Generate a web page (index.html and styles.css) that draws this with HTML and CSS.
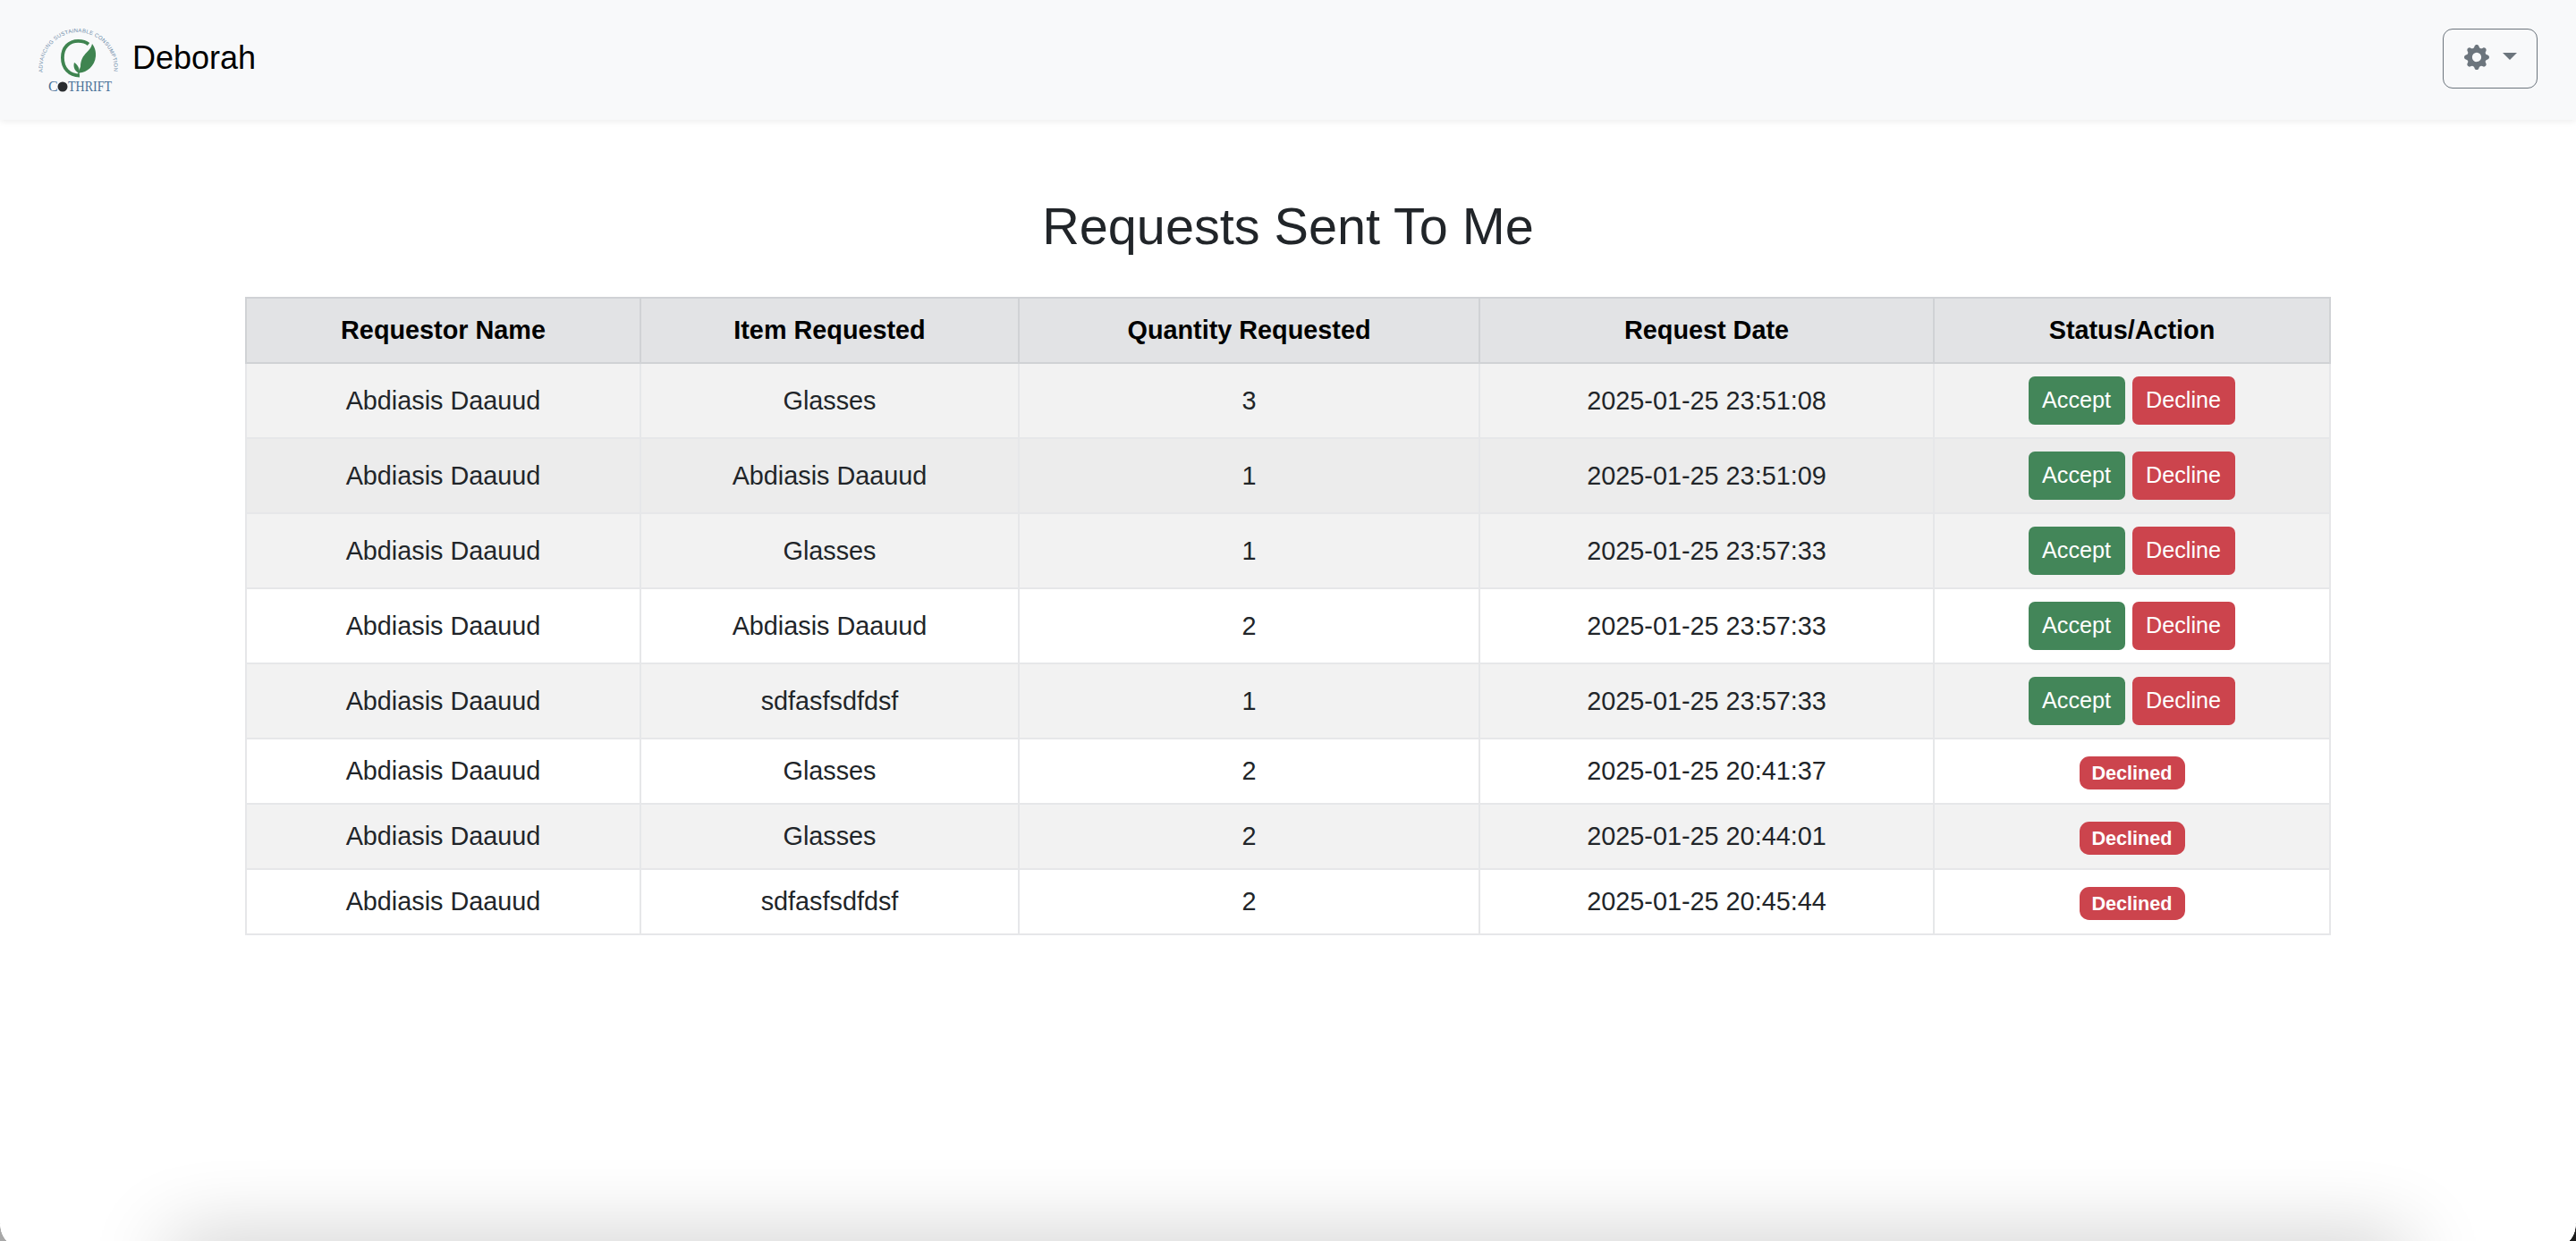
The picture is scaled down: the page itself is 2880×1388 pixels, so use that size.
FILE: index.html
```html
<!DOCTYPE html>
<html lang="en">
<head>
<meta charset="utf-8">
<title>Requests Sent To Me</title>
<link rel="stylesheet" href="styles.css">
</head>
<body>
<nav class="navbar">
  <a class="brand">
    <svg class="logo" viewBox="0 0 88 74" width="88" height="74">
      <defs><path id="logo-arc" d="M3.800 50 A40 40 0 1 1 83.200 50"/></defs>
      <text class="logo-arc-text"><textPath href="#logo-arc" textLength="134" lengthAdjust="spacing">ADVANCING SUSTAINABLE CONSUMPTION</textPath></text>
      <path class="logo-ring-line" d="M45 53.500C33 53.500 25.900 45 25.900 33.500C25.900 22 33 14.900 43.500 14.900C48 14.900 52 16 55 18.500"/>
      <path class="logo-leaf" d="M42 54.500C43.500 50 45 46.500 46 43.500C46 36 49 31.500 53 27.500C56 24.500 58.500 21.500 59 18C62 21.500 63.500 27 63 32C62 43 53 50 45 50.500C44 52 43 53.500 42 54.500Z"/>
      <path class="logo-leaf" d="M44.500 51C39.500 48.500 37.500 44 39 39C42.500 41 45.500 45.500 44.500 51Z"/>
      <text class="logo-name" x="10" y="71">C</text>
      <circle class="logo-dot" cx="26" cy="66" r="5.500"/>
      <text class="logo-name" x="32" y="71" textLength="49" lengthAdjust="spacingAndGlyphs">THRIFT</text>
    </svg>
    <span class="brand-name">Deborah</span>
  </a>
  <button class="settings" type="button" aria-label="Settings">
    <svg class="gear" viewBox="0 0 16 16" width="28" height="28"><path fill-rule="evenodd" d="M9.405 1.050c-.413-1.400-2.397-1.400-2.810 0l-.100.340a1.464 1.464 0 0 1-2.105.872l-.310-.170c-1.283-.698-2.686.705-1.987 1.987l.169.311c.446.820.023 1.841-.872 2.105l-.340.100c-1.400.413-1.400 2.397 0 2.810l.340.100a1.464 1.464 0 0 1 .872 2.105l-.170.310c-.698 1.283.705 2.686 1.987 1.987l.311-.169a1.464 1.464 0 0 1 2.105.872l.100.340c.413 1.400 2.397 1.400 2.810 0l.100-.340a1.464 1.464 0 0 1 2.105-.872l.310.170c1.283.698 2.686-.705 1.987-1.987l-.169-.311a1.464 1.464 0 0 1 .872-2.105l.340-.100c1.400-.413 1.400-2.397 0-2.810l-.340-.100a1.464 1.464 0 0 1-.872-2.105l.170-.310c.698-1.283-.705-2.686-1.987-1.987l-.311.169a1.464 1.464 0 0 1-2.105-.872l-.100-.340zM8 10.930a2.929 2.929 0 1 1 0-5.860 2.929 2.929 0 0 1 0 5.858z"/></svg>
    <span class="caret"></span>
  </button>
</nav>
<main class="content">
  <h1 class="title">Requests Sent To Me</h1>
  <table class="requests">
    <colgroup>
      <col class="col-a"><col class="col-b"><col class="col-c"><col class="col-d"><col class="col-e">
    </colgroup>
    <thead>
      <tr><th>Requestor Name</th><th>Item Requested</th><th>Quantity Requested</th><th>Request Date</th><th>Status/Action</th></tr>
    </thead>
    <tbody>
      <tr class="tall shade"><td>Abdiasis Daauud</td><td>Glasses</td><td>3</td><td>2025-01-25 23:51:08</td><td><div class="actions"><button class="btn accept" type="button">Accept</button><button class="btn decline" type="button">Decline</button></div></td></tr>
      <tr class="tall hover"><td>Abdiasis Daauud</td><td>Abdiasis Daauud</td><td>1</td><td>2025-01-25 23:51:09</td><td><div class="actions"><button class="btn accept" type="button">Accept</button><button class="btn decline" type="button">Decline</button></div></td></tr>
      <tr class="tall shade"><td>Abdiasis Daauud</td><td>Glasses</td><td>1</td><td>2025-01-25 23:57:33</td><td><div class="actions"><button class="btn accept" type="button">Accept</button><button class="btn decline" type="button">Decline</button></div></td></tr>
      <tr class="tall"><td>Abdiasis Daauud</td><td>Abdiasis Daauud</td><td>2</td><td>2025-01-25 23:57:33</td><td><div class="actions"><button class="btn accept" type="button">Accept</button><button class="btn decline" type="button">Decline</button></div></td></tr>
      <tr class="tall shade"><td>Abdiasis Daauud</td><td>sdfasfsdfdsf</td><td>1</td><td>2025-01-25 23:57:33</td><td><div class="actions"><button class="btn accept" type="button">Accept</button><button class="btn decline" type="button">Decline</button></div></td></tr>
      <tr class="short"><td>Abdiasis Daauud</td><td>Glasses</td><td>2</td><td>2025-01-25 20:41:37</td><td><span class="badge">Declined</span></td></tr>
      <tr class="short shade"><td>Abdiasis Daauud</td><td>Glasses</td><td>2</td><td>2025-01-25 20:44:01</td><td><span class="badge">Declined</span></td></tr>
      <tr class="short"><td>Abdiasis Daauud</td><td>sdfasfsdfdsf</td><td>2</td><td>2025-01-25 20:45:44</td><td><span class="badge">Declined</span></td></tr>
    </tbody>
  </table>
</main>
<div class="bottom-shadow"></div>
<div class="corner corner-left"></div>
<div class="corner corner-right"></div>
</body>
</html>
```

FILE: styles.css
```css
html, body {
  margin: 0;
  height: 100%;
  background: #fff;
  overflow: hidden;
}

body {
  position: relative;
  font-family: "Liberation Sans", Arial, sans-serif;
  color: #212529;
}

.navbar {
  height: 134px;
  box-sizing: border-box;
  padding: 0 43px 4px 44px;
  display: flex;
  align-items: center;
  justify-content: space-between;
  background: #f8f9fa;
  box-shadow: 0 2px 7px rgba(0, 0, 0, 0.07);
}

.brand {
  display: flex;
  align-items: center;
  gap: 16px;
  color: #000;
}

.logo {
  display: block;
  margin-top: 5px;
  overflow: visible;
}

.logo-arc-text {
  font-size: 6px;
  fill: #6d8aa8;
  font-family: "Liberation Sans", Arial, sans-serif;
}

.logo-ring-line {
  fill: none;
  stroke: #3f8450;
  stroke-width: 3.800px;
}

.logo-leaf {
  fill: #3f8450;
}

.logo-name {
  font-family: "Liberation Serif", serif;
  font-size: 16px;
  fill: #4a7299;
}

.logo-dot {
  fill: #2a2d30;
}

.brand-name {
  font-size: 36px;
  line-height: 1;
}

.settings {
  width: 106px;
  height: 67px;
  padding: 0 0 2px;
  display: flex;
  align-items: center;
  justify-content: center;
  gap: 15px;
  background: transparent;
  border: 1.500px solid #6c757d;
  border-radius: 11px;
}

.gear {
  display: block;
  fill: #6c757d;
}

.caret {
  width: 0;
  height: 0;
  border-top: 8px solid #6c757d;
  border-left: 8px solid transparent;
  border-right: 8px solid transparent;
  margin-bottom: 3px;
}

.content {
  padding: 0 274px;
}

.title {
  margin: 0;
  padding: 85px 0 0;
  height: 113px;
  box-sizing: content-box;
  font-size: 57.600px;
  font-weight: 400;
  line-height: 69px;
  text-align: center;
}

.requests {
  width: 2330px;
  table-layout: fixed;
  border-collapse: collapse;
  font-size: 28.800px;
  text-align: center;
}

.col-a { width: 441px; }
.col-b { width: 423px; }
.col-c { width: 515px; }
.col-d { width: 508px; }
.col-e { width: 443px; }

th, td {
  padding: 0;
  border: 2px solid #e6e7e9;
  vertical-align: middle;
}

th {
  height: 71px;
  background: #e2e3e5;
  border-color: #d0d2d5;
  color: #000;
  font-weight: 700;
}

.tall td { height: 82px; }
.short td { height: 71px; }
.shade td { background: #f2f2f2; }
.hover td { background: #ececec; }

.actions {
  display: flex;
  justify-content: center;
  gap: 8px;
  padding-right: 1px;
}

.btn {
  height: 54px;
  padding: 0 14.400px 1px;
  border: 0;
  border-radius: 7px;
  color: #fff;
  font-family: inherit;
  font-size: 25.200px;
}

.accept { background: #438659; width: 108px; }
.decline { background: #cc444d; width: 115px; }

.badge {
  display: inline-block;
  width: 118px;
  height: 37px;
  margin-top: 3px;
  border-radius: 10.800px;
  background: #cc444d;
  color: #fff;
  font-size: 21.600px;
  font-weight: 700;
  line-height: 37px;
  vertical-align: middle;
}

.bottom-shadow {
  position: absolute;
  left: 190px;
  right: 190px;
  top: 100%;
  height: 60px;
  box-shadow: 0 0 90px rgba(0, 0, 0, 0.24);
}

.corner {
  position: absolute;
  bottom: 0;
  width: 10px;
  height: 20px;
}

.corner-left {
  left: 0;
  background: radial-gradient(circle 26.600px at 26.600px 2px, transparent 26.100px, #a8a8a8 26.600px);
}

.corner-right {
  right: 0;
  background: radial-gradient(circle 26.600px at -16.600px 2px, transparent 26.100px, #1c1c1c 26.600px);
}
```
